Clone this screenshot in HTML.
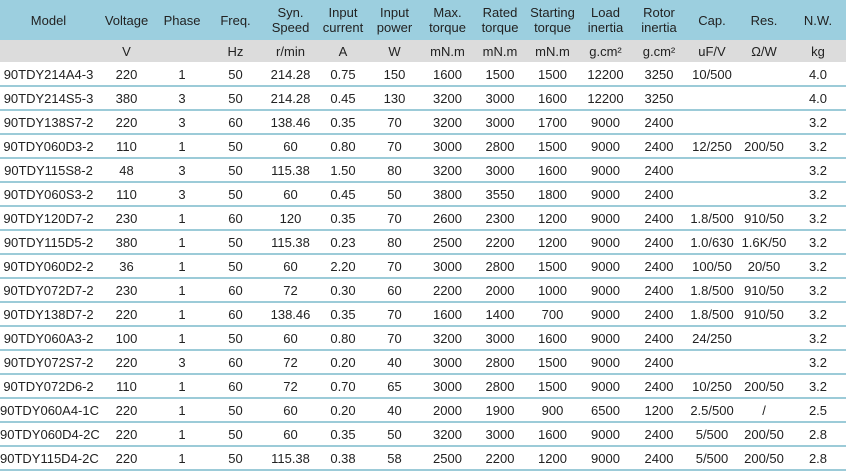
<!DOCTYPE html>
<html><head><meta charset="utf-8"><style>
*{margin:0;padding:0;box-sizing:border-box}
body{width:846px;height:473px;background:#fff;font-family:"Liberation Sans",Arial,sans-serif;font-size:13px;color:#222;overflow:hidden}
table{border-collapse:collapse;table-layout:fixed;width:846px}
td{text-align:center;padding:0;white-space:nowrap;overflow:visible}
tr.h td{background:#9ccfdf;height:40px;line-height:15px}
tr.u td{background:#dcdcdc;height:22px}
tr.d td{height:24px;border-bottom:2px solid #9ccbd8;padding-top:1px}
</style></head><body>
<table>
<colgroup><col style="width:97px"><col style="width:59px"><col style="width:52px"><col style="width:55px"><col style="width:55px"><col style="width:50px"><col style="width:53px"><col style="width:53px"><col style="width:52px"><col style="width:53px"><col style="width:53px"><col style="width:54px"><col style="width:52px"><col style="width:52px"><col style="width:56px"></colgroup>
<tr class="h"><td>Model</td><td>Voltage</td><td>Phase</td><td>Freq.</td><td>Syn.<br>Speed</td><td>Input<br>current</td><td>Input<br>power</td><td>Max.<br>torque</td><td>Rated<br>torque</td><td>Starting<br>torque</td><td>Load<br>inertia</td><td>Rotor<br>inertia</td><td>Cap.</td><td>Res.</td><td>N.W.</td></tr>
<tr class="u"><td></td><td>V</td><td></td><td>Hz</td><td>r/min</td><td>A</td><td>W</td><td>mN.m</td><td>mN.m</td><td>mN.m</td><td>g.cm²</td><td>g.cm²</td><td>uF/V</td><td>Ω/W</td><td>kg</td></tr>
<tr class="d"><td>90TDY214A4-3</td><td>220</td><td>1</td><td>50</td><td>214.28</td><td>0.75</td><td>150</td><td>1600</td><td>1500</td><td>1500</td><td>12200</td><td>3250</td><td>10/500</td><td></td><td>4.0</td></tr>
<tr class="d"><td>90TDY214S5-3</td><td>380</td><td>3</td><td>50</td><td>214.28</td><td>0.45</td><td>130</td><td>3200</td><td>3000</td><td>1600</td><td>12200</td><td>3250</td><td></td><td></td><td>4.0</td></tr>
<tr class="d"><td>90TDY138S7-2</td><td>220</td><td>3</td><td>60</td><td>138.46</td><td>0.35</td><td>70</td><td>3200</td><td>3000</td><td>1700</td><td>9000</td><td>2400</td><td></td><td></td><td>3.2</td></tr>
<tr class="d"><td>90TDY060D3-2</td><td>110</td><td>1</td><td>50</td><td>60</td><td>0.80</td><td>70</td><td>3000</td><td>2800</td><td>1500</td><td>9000</td><td>2400</td><td>12/250</td><td>200/50</td><td>3.2</td></tr>
<tr class="d"><td>90TDY115S8-2</td><td>48</td><td>3</td><td>50</td><td>115.38</td><td>1.50</td><td>80</td><td>3200</td><td>3000</td><td>1600</td><td>9000</td><td>2400</td><td></td><td></td><td>3.2</td></tr>
<tr class="d"><td>90TDY060S3-2</td><td>110</td><td>3</td><td>50</td><td>60</td><td>0.45</td><td>50</td><td>3800</td><td>3550</td><td>1800</td><td>9000</td><td>2400</td><td></td><td></td><td>3.2</td></tr>
<tr class="d"><td>90TDY120D7-2</td><td>230</td><td>1</td><td>60</td><td>120</td><td>0.35</td><td>70</td><td>2600</td><td>2300</td><td>1200</td><td>9000</td><td>2400</td><td>1.8/500</td><td>910/50</td><td>3.2</td></tr>
<tr class="d"><td>90TDY115D5-2</td><td>380</td><td>1</td><td>50</td><td>115.38</td><td>0.23</td><td>80</td><td>2500</td><td>2200</td><td>1200</td><td>9000</td><td>2400</td><td>1.0/630</td><td>1.6K/50</td><td>3.2</td></tr>
<tr class="d"><td>90TDY060D2-2</td><td>36</td><td>1</td><td>50</td><td>60</td><td>2.20</td><td>70</td><td>3000</td><td>2800</td><td>1500</td><td>9000</td><td>2400</td><td>100/50</td><td>20/50</td><td>3.2</td></tr>
<tr class="d"><td>90TDY072D7-2</td><td>230</td><td>1</td><td>60</td><td>72</td><td>0.30</td><td>60</td><td>2200</td><td>2000</td><td>1000</td><td>9000</td><td>2400</td><td>1.8/500</td><td>910/50</td><td>3.2</td></tr>
<tr class="d"><td>90TDY138D7-2</td><td>220</td><td>1</td><td>60</td><td>138.46</td><td>0.35</td><td>70</td><td>1600</td><td>1400</td><td>700</td><td>9000</td><td>2400</td><td>1.8/500</td><td>910/50</td><td>3.2</td></tr>
<tr class="d"><td>90TDY060A3-2</td><td>100</td><td>1</td><td>50</td><td>60</td><td>0.80</td><td>70</td><td>3200</td><td>3000</td><td>1600</td><td>9000</td><td>2400</td><td>24/250</td><td></td><td>3.2</td></tr>
<tr class="d"><td>90TDY072S7-2</td><td>220</td><td>3</td><td>60</td><td>72</td><td>0.20</td><td>40</td><td>3000</td><td>2800</td><td>1500</td><td>9000</td><td>2400</td><td></td><td></td><td>3.2</td></tr>
<tr class="d"><td>90TDY072D6-2</td><td>110</td><td>1</td><td>60</td><td>72</td><td>0.70</td><td>65</td><td>3000</td><td>2800</td><td>1500</td><td>9000</td><td>2400</td><td>10/250</td><td>200/50</td><td>3.2</td></tr>
<tr class="d"><td>90TDY060A4-1C</td><td>220</td><td>1</td><td>50</td><td>60</td><td>0.20</td><td>40</td><td>2000</td><td>1900</td><td>900</td><td>6500</td><td>1200</td><td>2.5/500</td><td>/</td><td>2.5</td></tr>
<tr class="d"><td>90TDY060D4-2C</td><td>220</td><td>1</td><td>50</td><td>60</td><td>0.35</td><td>50</td><td>3200</td><td>3000</td><td>1600</td><td>9000</td><td>2400</td><td>5/500</td><td>200/50</td><td>2.8</td></tr>
<tr class="d"><td>90TDY115D4-2C</td><td>220</td><td>1</td><td>50</td><td>115.38</td><td>0.38</td><td>58</td><td>2500</td><td>2200</td><td>1200</td><td>9000</td><td>2400</td><td>5/500</td><td>200/50</td><td>2.8</td></tr>
</table>
</body></html>
